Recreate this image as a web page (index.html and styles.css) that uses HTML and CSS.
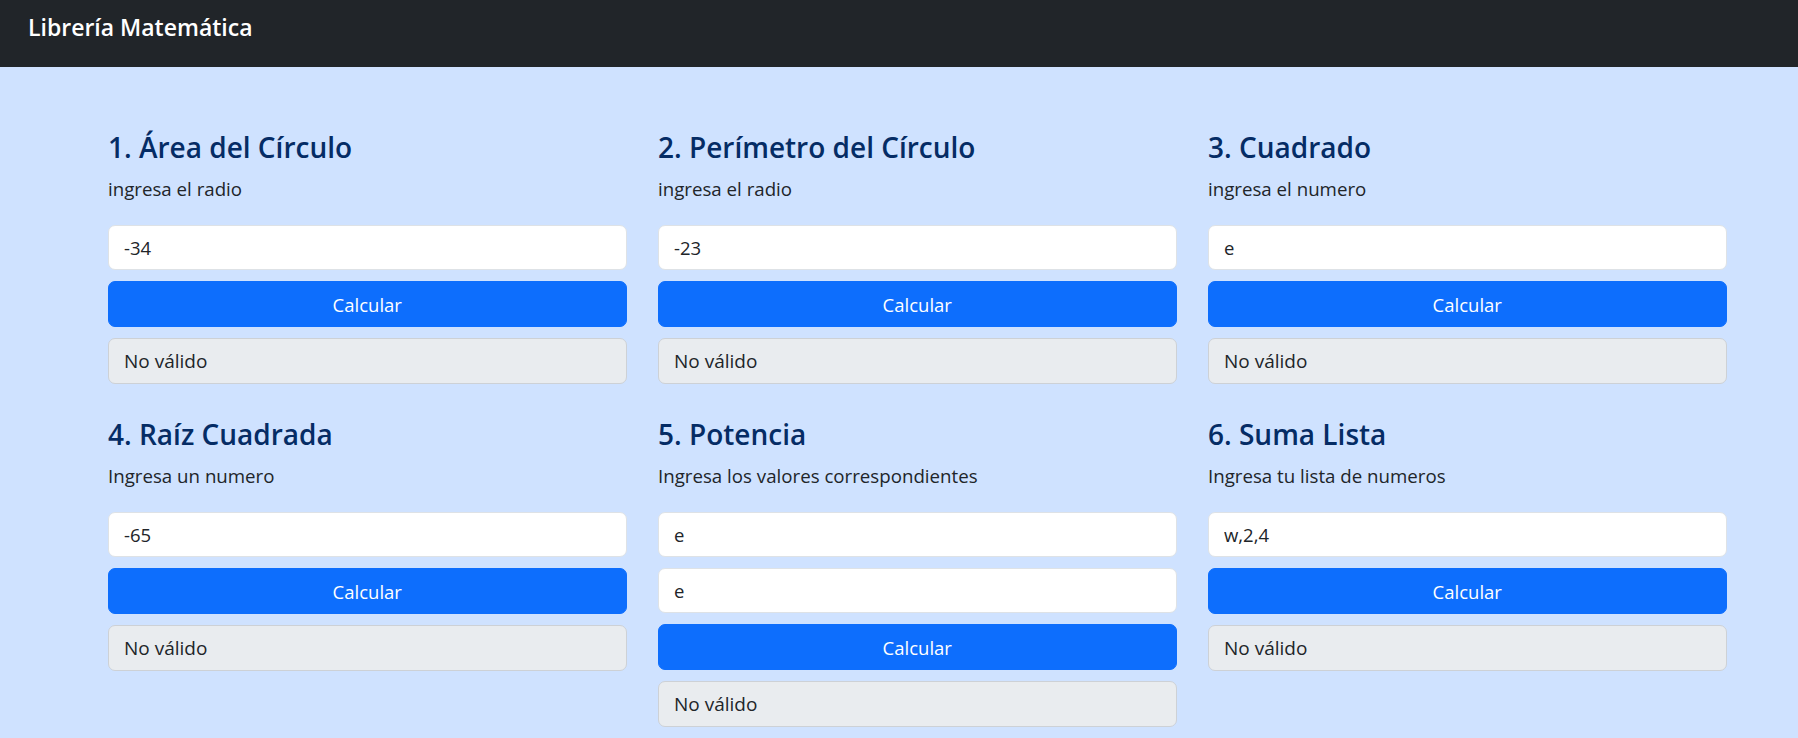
FILE: index.html
```html
<!DOCTYPE html>
<html lang="es">
<head>
<meta charset="utf-8">
<title>Librería Matemática</title>
<link rel="stylesheet" href="styles.css">
</head>
<body>
<nav class="navbar">
  <span class="brand">Librería Matemática</span>
</nav>
<main class="page">
  <div class="grid">
    <section class="card">
      <h2 class="title">1. Área del Círculo</h2>
      <p class="hint">ingresa el radio</p>
      <input class="field" type="text" value="-34">
      <button class="btn">Calcular</button>
      <div class="result">No válido</div>
    </section>
    <section class="card">
      <h2 class="title">2. Perímetro del Círculo</h2>
      <p class="hint">ingresa el radio</p>
      <input class="field" type="text" value="-23">
      <button class="btn">Calcular</button>
      <div class="result">No válido</div>
    </section>
    <section class="card">
      <h2 class="title">3. Cuadrado</h2>
      <p class="hint">ingresa el numero</p>
      <input class="field" type="text" value="e">
      <button class="btn">Calcular</button>
      <div class="result">No válido</div>
    </section>
    <section class="card">
      <h2 class="title">4. Raíz Cuadrada</h2>
      <p class="hint">Ingresa un numero</p>
      <input class="field" type="text" value="-65">
      <button class="btn">Calcular</button>
      <div class="result">No válido</div>
    </section>
    <section class="card">
      <h2 class="title">5. Potencia</h2>
      <p class="hint">Ingresa los valores correspondientes</p>
      <input class="field" type="text" value="e">
      <input class="field" type="text" value="e">
      <button class="btn">Calcular</button>
      <div class="result">No válido</div>
    </section>
    <section class="card">
      <h2 class="title">6. Suma Lista</h2>
      <p class="hint">Ingresa tu lista de numeros</p>
      <input class="field" type="text" value="w,2,4">
      <button class="btn">Calcular</button>
      <div class="result">No válido</div>
    </section>
  </div>
</main>
</body>
</html>
```
FILE: styles.css
```css
* { box-sizing: border-box; }
html, body {
  margin: 0;
  height: 100%;
}
body {
  background: #cfe2ff;
  font-family: "Segoe UI", "Open Sans", "Noto Sans", sans-serif;
  color: #212529;
  font-size: 19px;
  overflow: hidden;
}
.navbar {
  height: 67px;
  background: #212529;
  display: flex;
  align-items: center;
  padding-left: 28px;
}
.brand {
  color: #ffffff;
  font-size: 23px;
  font-weight: 600;
  line-height: 1;
  margin-top: -12px;
}
.page {
  padding: 63px 0 0 108px;
}
.grid {
  display: grid;
  grid-template-columns: repeat(3, 518.5px);
  column-gap: 31.5px;
  row-gap: 33px;
  align-items: start;
}
.card {
  display: flex;
  flex-direction: column;
  gap: 11px;
}
.title {
  margin: 0;
  font-size: 28px;
  font-weight: 600;
  line-height: 34px;
  color: #052c65;
}
.hint {
  margin: 0 0 11px;
  font-size: 18.7px;
  line-height: 28px;
  color: #212529;
}
.field {
  height: 45px;
  border: 1px solid #dee2e6;
  border-radius: 7px;
  background: #ffffff;
  padding: 0 15px;
  font-family: inherit;
  font-size: 18.5px;
  color: #212529;
  outline: none;
}
.btn {
  height: 46px;
  border: 1px solid #0d6efd;
  border-radius: 7px;
  background: #0d6efd;
  color: #ffffff;
  font-family: inherit;
  font-size: 18.5px;
  cursor: pointer;
}
.result {
  height: 46px;
  border: 1px solid #cdd1d6;
  border-radius: 7px;
  background: #e9ecef;
  padding: 0 15px;
  display: flex;
  align-items: center;
  font-size: 19px;
  color: #212529;
}
```
